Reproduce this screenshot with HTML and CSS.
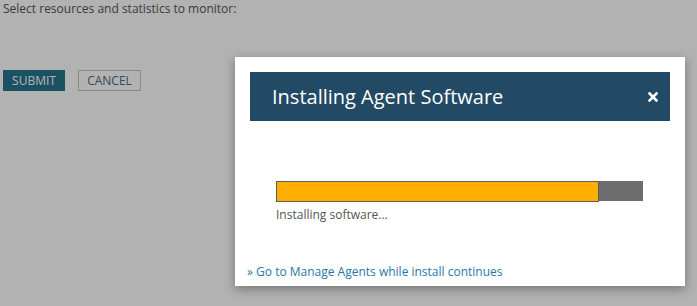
FILE: index.html
```html
<!DOCTYPE html>
<html>
<head>
<meta charset="utf-8">
<link rel="stylesheet" href="styles.css">
</head>
<body>
<div class="page">
    <p class="intro">Select resources and statistics to monitor:</p>
    <div class="actions">
        <button class="btn btn-primary">SUBMIT</button>
        <button class="btn btn-default">CANCEL</button>
    </div>
</div>

<div class="overlay"></div>

<div class="modal">
    <div class="modal-head">
        <h2>Installing Agent Software</h2>
        <svg class="close" width="10" height="10" viewBox="0 0 10 10">
            <path d="M1.5 1.5 L8.5 8.5 M8.5 1.5 L1.5 8.5" stroke="#fff" stroke-width="2.6" stroke-linecap="square"/>
        </svg>
    </div>
    <div class="modal-body">
        <div class="progress">
            <div class="progress-bar" style="width: 88%"></div>
        </div>
        <p class="status">Installing software...</p>
    </div>
    <a class="more" href="#">&raquo; Go to Manage Agents while install continues</a>
</div>
</body>
</html>
```

FILE: styles.css
```css
* {
    margin: 0;
    padding: 0;
    box-sizing: border-box;
}

body {
    font-family: "Open Sans", "Liberation Sans", sans-serif;
    font-size: 12px;
    color: #555;
    background: #fff;
    width: 697px;
    height: 306px;
    overflow: hidden;
}

.page {
    padding: 1px 3px;
}

.intro {
    line-height: 16px;
    color: #555;
}

.actions {
    display: flex;
    gap: 13px;
    margin-top: 53px;
}

.btn {
    font-family: inherit;
    font-size: 12px;
    height: 21px;
    width: 62px;
    line-height: 19px;
    cursor: pointer;
}

.btn-primary {
    background: #267690;
    border: 1px solid #267690;
    color: #fff;
}

.btn-default {
    width: 63px;
    background: #fff;
    border: 1px solid #c4c4c4;
    color: #4e6a80;
}

/* 遮罩 */
.overlay {
    position: absolute;
    top: 0;
    left: 0;
    width: 100%;
    height: 100%;
    background: rgba(0, 0, 0, .3);
}

.modal {
    position: absolute;
    left: 235px;
    top: 57px;
    width: 450px;
    height: 229px;
    background: #fff;
    padding: 15px 15px 0 12px;
    box-shadow: 0 3px 10px rgba(0, 0, 0, .35);
    display: flex;
    flex-direction: column;
}

.modal-head {
    margin-left: 3px;
    height: 49px;
    background: #224a65;
    color: #fff;
    display: flex;
    align-items: center;
    justify-content: space-between;
    padding: 0 12px 0 22px;
}

.modal-head h2 {
    font-size: 20px;
    font-weight: normal;
}

.close {
    display: block;
    margin-top: 1px;
    cursor: pointer;
}

.modal-body {
    padding: 60px 27px 0 29px;
    flex: 1;
}

.progress {
    height: 20px;
    background: #6d6d6d;
}

.progress-bar {
    height: 21px;
    background: #ffad00;
    border: 1px solid #5e5e5e;
}

.status {
    margin-top: 5px;
    line-height: 17px;
    color: #555;
}

.more {
    color: #1f79a8;
    text-decoration: none;
    line-height: 17px;
    margin-bottom: 6px;
}
```
